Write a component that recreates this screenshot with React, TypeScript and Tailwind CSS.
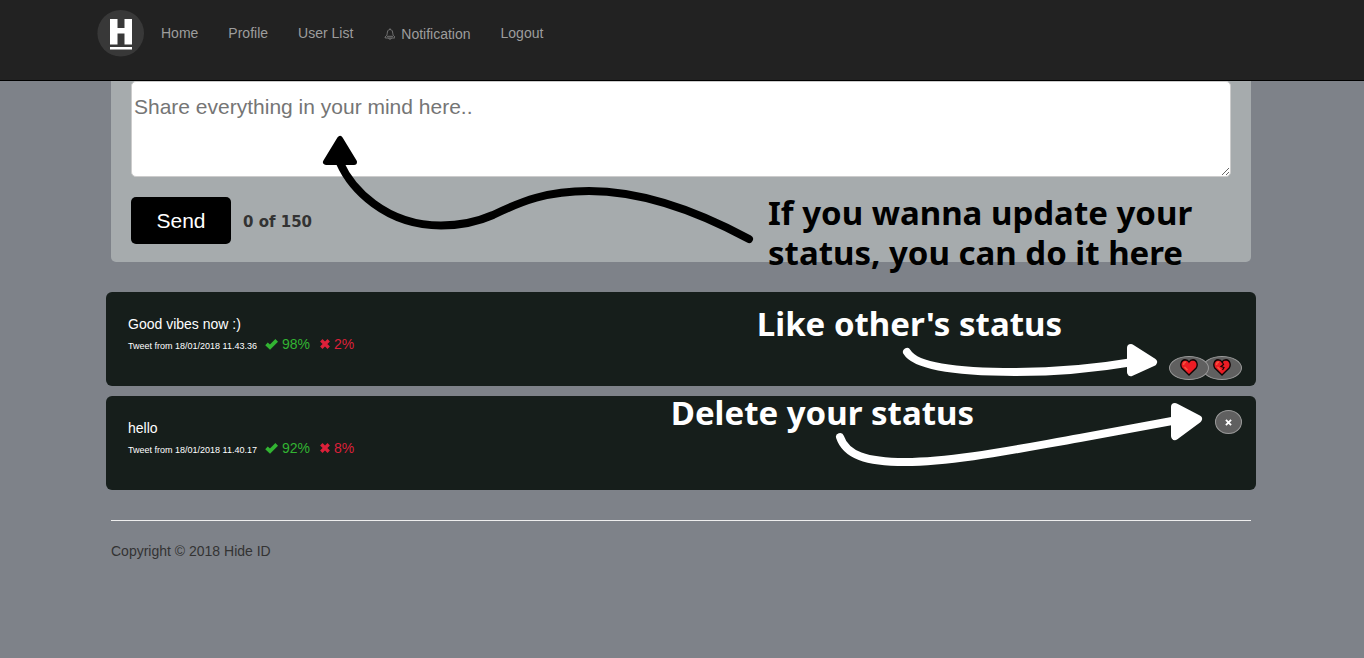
type Status = {
  id: number;
  text: string;
  date: string;
  likes: number;
  dislikes: number;
  own: boolean;
};

const statuses: Status[] = [
  { id: 1, text: "Good vibes now :)", date: "18/01/2018 11.43.36", likes: 98, dislikes: 2, own: false },
  { id: 2, text: "hello", date: "18/01/2018 11.40.17", likes: 92, dislikes: 8, own: true },
];

const noteText = "absolute whitespace-nowrap font-['Noto_Sans',sans-serif] text-[33px] leading-10 font-bold";

function Logo() {
  return (
    <svg width="48" height="48" viewBox="0 0 48 48" aria-hidden="true">
      <circle cx="23.700" cy="24.200" r="23.300" fill="#383838" />
      <path d="M13 10h7.500v9h7v-9H35v25.500h-7.500v-11h-7v11H13z" fill="#fff" />
      <rect x="13" y="38" width="22" height="2.500" fill="#fff" />
    </svg>
  );
}

function Bell() {
  return (
    <svg width="12" height="12" viewBox="0 0 12 12" fill="none" stroke="#888" strokeWidth="0.8" aria-hidden="true">
      <path d="M7 .3v1M7 1.500C4.800 1.500 4.400 3.500 4.200 5.500 4 7.300 3.300 8 2 9l.3 1h9.400l.3-1c-1.300-1-2-1.700-2.200-3.500C9.600 3.500 9.200 1.500 7 1.500zM4 8.300h6M5.500 10.300c.3 1.200 2.700 1.200 3 0" />
    </svg>
  );
}

function Check() {
  return (
    <svg width="13" height="12" viewBox="0 0 13 12" className="mr-1" aria-hidden="true">
      <path d="M1.500 5.800 5 9.100 11.700 2.400" fill="none" stroke="#32b432" strokeWidth="3.700" />
    </svg>
  );
}

function Cross({ small = false }: { small?: boolean }) {
  return (
    <svg
      width={small ? 7 : 10}
      height={small ? 7 : 10}
      viewBox="0 0 10 10"
      fill="none"
      stroke="currentColor"
      strokeWidth={small ? 2.6 : 3.4}
      aria-hidden="true"
    >
      <path d="M1.300 1.300 8.700 8.700M8.700 1.300 1.300 8.700" />
    </svg>
  );
}

function Heart({ broken = false }: { broken?: boolean }) {
  return (
    <svg width="18" height="17" viewBox="0 0 18 17" aria-hidden="true">
      <path
        d="M9 16 1.800 9C-.2 6 1 1 5 .8 7 .8 8.300 1.800 9 3 9.700 1.800 11 .8 13 .8c4 .2 5.200 5.200 3.200 8.200z"
        fill="#ed1c24"
        stroke="#120606"
        strokeWidth="1.400"
      />
      <path d="M3.500 6C3.500 4.200 4.300 3.200 6 3" fill="none" stroke="#f4553e" strokeWidth="1.500" />
      <path d="M4.500 8 7.500 11" fill="none" stroke="#f4553e" strokeWidth="1.500" />
      {broken && <path d="M9 2.500 10.500 5.500 8 7.500 11 8.500 9.500 11" fill="none" stroke="#120606" strokeWidth="1.200" />}
    </svg>
  );
}

function Navbar() {
  const link = "px-[15px] text-[#9d9d9d] hover:text-white";
  return (
    <header className="border-b border-black bg-[#222]">
      <nav className="mx-auto flex h-20 max-w-[1170px] items-start gap-px pt-[9px] text-sm leading-5" aria-label="Main">
        <a href="#top" aria-label="Hide ID">
          <Logo />
        </a>
        <div className="flex pt-3.5">
          <a href="#home" className={link}>Home</a>
          <a href="#profile" className={link}>Profile</a>
          <a href="#users" className={link}>User List</a>
          <a href="#notification" className="flex items-center gap-1.5 px-[15px] pt-px text-[#9d9d9d] hover:text-white">
            <Bell />
            Notification
          </a>
          <a href="#logout" className={link}>Logout</a>
        </div>
      </nav>
    </header>
  );
}

function Composer() {
  return (
    <form className="relative mx-[5px] rounded-b-[5px] bg-[#a6abad] px-5 pb-[18px]">
      <textarea
        aria-label="Status"
        maxLength={150}
        placeholder="Share everything in your mind here.."
        className="block h-24 w-full resize rounded-[5px] border border-[#ccc] bg-white px-0.5 py-2.5 text-[21px] leading-[30px] text-[#555] outline-none placeholder:text-[#757575]"
      />
      <div className="mt-5 flex items-center gap-3">
        <button type="button" className="h-[47px] w-[100px] rounded-[5px] bg-black text-[21px] text-white">
          Send
        </button>
        <span className="pt-1 font-['DejaVu_Sans',sans-serif] text-[15px] font-bold text-[#333]">0 of 150</span>
      </div>
      <svg className="pointer-events-none absolute top-[49px] right-[494px]" width="440" height="120" viewBox="0 0 440 120" aria-hidden="true">
        <path
          d="M23 33C34 58 68 95.500 124 95.500C145 95.500 160 92 176 85C205 71 230 61 272 61C325 61 380 81 432 109"
          fill="none"
          stroke="#000"
          strokeWidth="8"
          strokeLinecap="round"
        />
        <path d="M23 9 9 32H37z" fill="#000" stroke="#000" strokeWidth="6" strokeLinejoin="round" />
      </svg>
      <p className={noteText + " top-28 left-[657px] text-black"}>
        If you wanna update your
        <br />
        status, you can do it here
      </p>
    </form>
  );
}

function LikeNote() {
  return (
    <>
      <p className={noteText + " top-3 right-[194px] text-white"}>Like other's status</p>
      <svg className="pointer-events-none absolute top-[48px] right-[96px]" width="262" height="44" viewBox="0 0 262 44" aria-hidden="true">
        <path d="M9 12C18 27 62 32 117 32C155 32 200 28 235 22" fill="none" stroke="#fff" strokeWidth="8" strokeLinecap="round" />
        <path d="M233 8 255 22 233 32z" fill="#fff" stroke="#fff" strokeWidth="8" strokeLinejoin="round" />
      </svg>
    </>
  );
}

function DeleteNote() {
  return (
    <>
      <p className={noteText + " -top-[3px] right-[282px] text-white"}>Delete your status</p>
      <svg className="pointer-events-none absolute top-[3px] right-[50px]" width="374" height="76" viewBox="0 0 374 76" aria-hidden="true">
        <path d="M8 38C14 56 34 63 73 63C124 63 190 49 248 39L340 22" fill="none" stroke="#fff" strokeWidth="8" strokeLinecap="round" />
        <path d="M343 8 366 20 343 37z" fill="#fff" stroke="#fff" strokeWidth="8" strokeLinejoin="round" />
      </svg>
    </>
  );
}

function StatusCard({ status }: { status: Status }) {
  const round = "flex items-center justify-center rounded-[50%] border border-[#999] bg-[#606060]";
  return (
    <article className="relative flex h-[94px] justify-between rounded-[6px] bg-[#161e1b] pr-3.5 pl-[22px]">
      <div className="pt-[22px] text-sm leading-5">
        <p className="text-white">{status.text}</p>
        <p className="flex items-center">
          <small className="mr-2 pt-0.5 text-[9px] text-white">Tweet from {status.date}</small>
          <span className="mr-2.5 flex items-center pb-0.5 text-[#32b432]">
            <Check />
            {status.likes}%
          </span>
          <span className="flex items-center gap-1 pb-0.5 text-[#dc2039]">
            <Cross />
            {status.dislikes}%
          </span>
        </p>
      </div>
      {status.own ? (
        <div className="pt-3.5">
          <button type="button" aria-label="Delete" className={round + " h-6 w-[27px] text-white"}>
            <Cross small />
          </button>
        </div>
      ) : (
        <div className="flex items-end pb-1.5">
          <button type="button" aria-label="Like" className={round + " z-10 -mr-[7px] h-6 w-10 pb-0.5"}>
            <Heart />
          </button>
          <button type="button" aria-label="Dislike" className={round + " h-6 w-10 pb-0.5"}>
            <Heart broken />
          </button>
        </div>
      )}
      {status.own ? <DeleteNote /> : <LikeNote />}
    </article>
  );
}

export default function App() {
  return (
    <div className="min-h-screen bg-[#7e8289] font-['Liberation_Sans',Arial,sans-serif]">
      <Navbar />
      <div className="pr-0.5">
        <main className="mx-auto max-w-[1150px]">
          <Composer />
          <section className="mt-[30px] flex flex-col gap-2.5" aria-label="Statuses">
            {statuses.map((s) => (
              <StatusCard key={s.id} status={s} />
            ))}
          </section>
        </main>
        <footer className="mx-auto mt-[30px] max-w-[1140px] border-t border-[#eee] pt-5 text-sm leading-5 text-[#333]">
          Copyright © 2018 Hide ID
        </footer>
      </div>
    </div>
  );
}
